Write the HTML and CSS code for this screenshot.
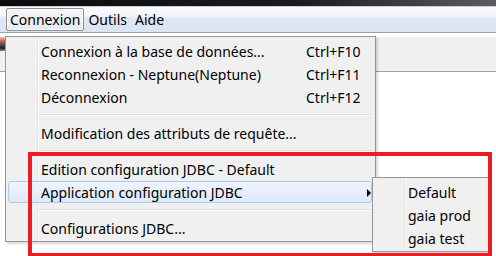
FILE: index.html
```html
<!DOCTYPE html>
<html lang="fr">
<head>
    <meta charset="UTF-8">
    <title>Connexion</title>
    <link rel="stylesheet" href="styles.css">
</head>
<body>

<div class="titlebar"></div>

<div class="menubar">
    <span class="menubar-item open">Connexion</span>
    <span class="menubar-item">Outils</span>
    <span class="menubar-item">Aide</span>
</div>

<div class="workspace">
    <div class="toolbar">
        <span class="tool-icon"></span>
    </div>
    <div class="content"></div>

    <!-- menu déroulant Connexion -->
    <div class="menu">
        <div class="menu-item"><span class="label">Connexion à la base de données...</span><span class="shortcut">Ctrl+F10</span></div>
        <div class="menu-item"><span class="label">Reconnexion - Neptune(Neptune)</span><span class="shortcut">Ctrl+F11</span></div>
        <div class="menu-item"><span class="label">Déconnexion</span><span class="shortcut">Ctrl+F12</span></div>
        <div class="menu-sep"></div>
        <div class="menu-item"><span class="label">Modification des attributs de requête...</span></div>
        <div class="menu-sep"></div>
        <div class="menu-item"><span class="label">Edition configuration JDBC - Default</span></div>
        <div class="menu-item active has-sub">
            <span class="label">Application configuration JDBC</span>
            <span class="arrow"></span>
            <div class="menu submenu">
                <div class="menu-item"><span class="label">Default</span></div>
                <div class="menu-item"><span class="label">gaia prod</span></div>
                <div class="menu-item"><span class="label">gaia test</span></div>
            </div>
        </div>
        <div class="menu-sep"></div>
        <div class="menu-item"><span class="label">Configurations JDBC...</span></div>
    </div>

    <!-- cadre rouge d'annotation -->
    <div class="annotation"></div>
</div>

</body>
</html>
```

FILE: styles.css
```css
body {
    margin: 0;
    width: 496px;
    height: 256px;
    overflow: hidden;
    background: #fff;
    font-family: "Noto Sans", "Open Sans", sans-serif;
    font-size: 14px;
    color: #000;
}

.titlebar {
    height: 6px;
    background: linear-gradient(to right, #0b0b0b 0%, #1c1c1c 60%, #5c5c5c 100%);
    border-bottom: 1px solid #c9ced6;
}

/* barre de menus */
.menubar {
    height: 25px;
    display: flex;
    align-items: center;
    padding-left: 6px;
    background: linear-gradient(#fbfcfe 0%, #f0f4fa 38%, #dfe7f4 45%, #dbe4f3 100%);
    border-bottom: 1px solid #a0a0a0;
}
.menubar-item {
    height: 21px;
    line-height: 22px;
    padding: 0 3px;
    border: 1px solid transparent;
    border-radius: 2px;
}
.menubar-item.open {
    border-color: #8e8f8f;
    background: linear-gradient(#f3f5f8, #e6eaf0);
    box-shadow: inset 0 0 0 1px rgba(255, 255, 255, 0.7);
}

.workspace {
    position: relative;
    height: 223px;
}
.toolbar {
    height: 34px;
    background: #f0f0f0;
    border-bottom: 1px solid #a0a0a0;
}
.tool-icon {
    display: block;
    width: 6px;
    height: 14px;
    margin-top: 4px;
    background: linear-gradient(#cfcfcf 0%, #e05050 30%, #555 50%, #222 80%, #888 100%);
    border-radius: 0 3px 3px 0;
}
.content {
    background: #fff;
}

/* menus déroulants */
.menu {
    position: absolute;
    left: 5px;
    top: -1px;
    width: 364px;
    padding: 2px 3px 1px 2px;
    background-color: #f0f0f0;
    background-image: linear-gradient(to right, transparent 31px, #e2e3e3 31px, #e2e3e3 32px, #fff 32px, #fff 33px, transparent 33px);
    border: 1px solid #979797;
    box-shadow: 2px 2px 2px rgba(0, 0, 0, 0.15);
}
.menu-item {
    display: flex;
    align-items: center;
    height: 22px;
    margin: 1px 0;
    padding-left: 32px;
    padding-top: 1px;
    border: 1px solid transparent;
    border-radius: 3px;
    box-sizing: border-box;
    white-space: nowrap;
}
.menu-item .label {
    flex: 1;
}
.menu-item .shortcut {
    width: 65px;
}
.menu-item.active {
    position: relative;
    border-color: #aeccf1;
    background: linear-gradient(#eef4fc, #dde9f8);
}
.arrow {
    width: 0;
    height: 0;
    border-top: 4px solid transparent;
    border-bottom: 4px solid transparent;
    border-left: 4px solid #000;
}
.menu-sep {
    height: 12px;
    margin-left: 30px;
    background: linear-gradient(transparent 5px, #e0e0e0 5px, #e0e0e0 6px, #fff 6px, #fff 7px, transparent 7px);
}

.submenu {
    left: 363px;
    top: -5px;
    width: 110px;
}

.annotation {
    position: absolute;
    left: 28px;
    top: 115px;
    width: 456px;
    height: 97px;
    border: 4px solid #ed1c24;
}
```
